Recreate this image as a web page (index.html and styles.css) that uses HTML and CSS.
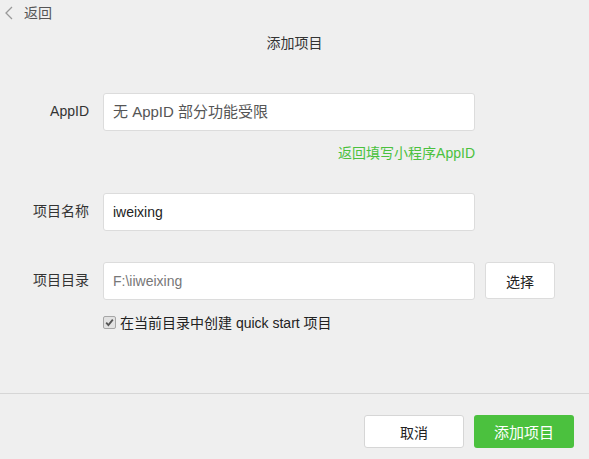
FILE: index.html
```html
<!DOCTYPE html>
<html lang="zh">
<head>
<meta charset="utf-8">
<link rel="stylesheet" href="styles.css">
</head>
<body>
<div class="top">
  <svg class="back-icon" width="10" height="14" viewBox="0 0 10 14"><path d="M8 1 L2 7 L8 13" fill="none" stroke="#999" stroke-width="1.3"/></svg>
  <span class="back-text">返回</span>
</div>
<div class="title">添加项目</div>
<div class="form">
  <div class="row">
    <div class="label">AppID</div>
    <div class="input placeholder">无 AppID 部分功能受限</div>
  </div>
  <div class="link-row"><span class="link">返回填写小程序AppID</span></div>
  <div class="row row-name">
    <div class="label">项目名称</div>
    <div class="input value">iweixing</div>
  </div>
  <div class="row row-dir">
    <div class="label">项目目录</div>
    <div class="input muted">F:\iiweixing</div>
    <div class="btn choose">选择</div>
  </div>
  <div class="check-row">
    <span class="checkbox"><svg width="11" height="11" viewBox="0 0 11 11"><path d="M2.2 5.6 L4.4 8 L8.8 2.6" fill="none" stroke="#555" stroke-width="1.8"/></svg></span>
    <span class="check-text">在当前目录中创建 quick start 项目</span>
  </div>
</div>
<div class="divider"></div>
<div class="footer">
  <div class="btn cancel">取消</div>
  <div class="btn primary">添加项目</div>
</div>
</body>
</html>
```
FILE: styles.css
```css
* { box-sizing: border-box; }
html, body { margin: 0; padding: 0; }
body {
  width: 589px;
  height: 459px;
  background: #efefef;
  font-family: "Liberation Sans", "Noto Sans CJK SC", sans-serif;
  font-size: 14px;
  color: #333;
  overflow: hidden;
}
.top {
  height: 26px;
  display: flex;
  align-items: center;
  padding-left: 4px;
}
.back-icon { display: block; }
.back-text {
  margin-left: 10px;
  color: #555;
  line-height: 20px;
}
.title {
  margin-top: 7px;
  line-height: 20px;
  text-align: center;
  color: #333;
}
.form { margin-top: 40px; }
.row {
  display: flex;
  align-items: flex-start;
}
.label {
  width: 89px;
  flex: none;
  text-align: right;
  line-height: 20px;
  padding-top: 8px;
  color: #333;
  margin-right: 14px;
}
.input {
  width: 372px;
  height: 38px;
  background: #fff;
  border: 1px solid #dcdcdc;
  border-radius: 3px;
  padding-left: 9px;
  line-height: 36px;
  flex: none;
}
.placeholder { color: #555; font-size: 15px; }
.value { color: #222; }
.muted { color: #777; }
.link-row {
  width: 475px;
  text-align: right;
  margin-top: 12px;
  line-height: 20px;
}
.link { color: #4bc13e; }
.row-name { margin-top: 30px; }
.row-dir { margin-top: 31px; }
.btn {
  display: flex;
  align-items: center;
  justify-content: center;
  border-radius: 3px;
  flex: none;
}
.choose {
  margin-left: 10px;
  width: 70px;
  height: 37px;
  background: #fff;
  border: 1px solid #dcdcdc;
  color: #222;
}
.check-row {
  margin-top: 12px;
  padding-left: 103px;
  display: flex;
  align-items: center;
  height: 20px;
}
.checkbox {
  width: 13px;
  height: 13px;
  border: 1px solid #a6a6a6;
  border-radius: 2px;
  background: #e2e2e2;
  display: flex;
  align-items: center;
  justify-content: center;
}
.checkbox svg { display: block; }
.check-text {
  margin-left: 4px;
  color: #222;
}
.divider {
  margin-top: 61px;
  height: 1px;
  background: #d6d6d6;
}
.footer {
  display: flex;
  justify-content: flex-end;
  gap: 10px;
  padding-right: 15px;
  margin-top: 21px;
}
.cancel {
  width: 100px;
  height: 33px;
  background: #fff;
  border: 1px solid #d6d6d6;
  color: #222;
}
.primary {
  width: 100px;
  height: 33px;
  background: #4bc13e;
  color: #fff;
  font-size: 15px;
}
```
